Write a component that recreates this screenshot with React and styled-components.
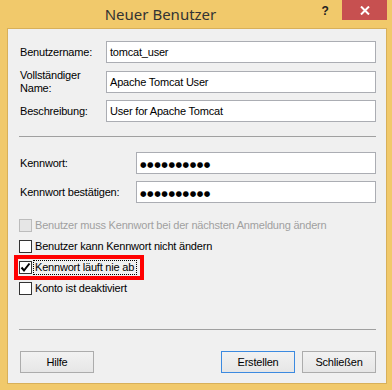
import React from "react";
import styled, { createGlobalStyle } from "styled-components";

const GlobalStyle = createGlobalStyle`
  html, body {
    margin: 0;
    padding: 0;
    background: #f1c96b;
  }
  * {
    box-sizing: border-box;
  }
`;

const Window = styled.div`
  width: 392px;
  height: 390px;
  display: flex;
  flex-direction: column;
  background: #f1c96b;
  font-family: "Liberation Sans", Arial, sans-serif;
  font-size: 11px;
  letter-spacing: -0.2px;
  color: #000;
  overflow: hidden;
`;

const TitleBar = styled.div`
  height: 29px;
  display: flex;
  align-items: flex-start;
`;

const Title = styled.div`
  flex: 1;
  text-align: center;
  font-family: "Noto Sans", "Open Sans", sans-serif;
  font-size: 15px;
  letter-spacing: 0;
  line-height: 29px;
  color: #333;
  padding-left: 4px;
`;

const HelpButton = styled.div`
  width: 16px;
  height: 20px;
  margin-right: 9px;
  font-weight: bold;
  font-size: 12px;
  line-height: 22px;
  color: #222;
  text-align: center;
`;

const CloseButton = styled.div`
  width: 45px;
  height: 20px;
  margin-right: 5px;
  background: #c75050;
  display: flex;
  align-items: center;
  justify-content: center;
`;

const Client = styled.div`
  height: 354px;
  margin: 0 6px 0 8px;
  background: #f0f0f0;
  box-shadow: 0 0 0 1px #d8b05a;
  padding: 12px 10px 10px 11px;
  display: flex;
  flex-direction: column;
`;

const FieldRow = styled.div`
  display: flex;
  align-items: center;
  height: 22px;
  margin-top: ${(p) => p.$mt || 0}px;
`;

const Label = styled.div`
  width: ${(p) => p.$w}px;
  flex-shrink: 0;
  padding-left: 1px;
  line-height: 13px;
`;

const TextBox = styled.div`
  flex: 1;
  height: 22px;
  background: #fff;
  border: 1px solid #abadb3;
  padding: 0 3px;
  line-height: 20px;
  white-space: nowrap;
  overflow: hidden;
`;

const Dots = styled.span`
  font-family: "DejaVu Sans", sans-serif;
  font-size: 7.5px;
  letter-spacing: 0.55px;
  line-height: 20px;
`;

const Separator = styled.div`
  height: 1px;
  background: #a0a0a0;
  margin-top: ${(p) => p.$mt}px;
`;

const CheckList = styled.div`
  display: flex;
  flex-direction: column;
  gap: 8px;
  margin-top: 16px;
`;

const CheckRow = styled.div`
  display: flex;
  align-items: center;
  height: 13px;
  color: ${(p) => (p.$disabled ? "#a0a0a0" : "#000")};
`;

const Highlight = styled.div`
  display: inline-flex;
  align-items: center;
  height: 15px;
  outline: 4px solid #ff0000;
  outline-offset: 1px;
  padding-right: 3px;
`;

const Box = styled.div`
  width: 13px;
  height: 13px;
  flex-shrink: 0;
  background: ${(p) => (p.$disabled ? "#e6e6e6" : "#fff")};
  border: 1px solid ${(p) => (p.$disabled ? "#bcbcbc" : "#333")};
  display: flex;
  align-items: center;
  justify-content: center;
`;

const CheckText = styled.span`
  line-height: 13px;
  white-space: nowrap;
  outline: ${(p) => (p.$focus ? "1px dotted #000" : "none")};
  padding: ${(p) => (p.$focus ? "0 2px 0 1px" : "0")};
  margin-left: ${(p) => (p.$focus ? "2px" : "3px")};
`;

const ButtonRow = styled.div`
  display: flex;
  gap: 7px;
  margin-top: 21px;
`;

const Button = styled.div`
  width: 74px;
  height: 22px;
  border: 1px solid ${(p) => (p.$default ? "#3c8ae0" : "#acacac")};
  background: linear-gradient(#f2f2f2, #e6e6e6);
  display: flex;
  align-items: center;
  justify-content: center;
  margin-right: ${(p) => (p.$push ? "auto" : "0")};
  margin-left: ${(p) => (p.$first ? "1px" : "0")};
`;

const CheckMark = () => (
  <svg width="11" height="11" viewBox="0 0 11 11">
    <path d="M1.5 5.5 L4 8.5 L9.5 1.5" fill="none" stroke="#000" strokeWidth="2" />
  </svg>
);

const CloseIcon = () => (
  <svg width="10" height="9" viewBox="0 0 10 9">
    <path d="M1 0.5 L9 8.5 M9 0.5 L1 8.5" stroke="#fff" strokeWidth="2" />
  </svg>
);

const checks = [
  { text: "Benutzer muss Kennwort bei der nächsten Anmeldung ändern", disabled: true },
  { text: "Benutzer kann Kennwort nicht ändern" },
  { text: "Kennwort läuft nie ab", checked: true, highlight: true },
  { text: "Konto ist deaktiviert" },
];

export default function App() {
  return (
    <>
      <GlobalStyle />
      <Window>
        <TitleBar>
          <Title>Neuer Benutzer</Title>
          <HelpButton>?</HelpButton>
          <CloseButton>
            <CloseIcon />
          </CloseButton>
        </TitleBar>
        <Client>
          <FieldRow>
            <Label $w={87}>Benutzername:</Label>
            <TextBox>tomcat_user</TextBox>
          </FieldRow>
          <FieldRow $mt={8}>
            <Label $w={87}>
              Vollständiger
              <br />
              Name:
            </Label>
            <TextBox>Apache Tomcat User</TextBox>
          </FieldRow>
          <FieldRow $mt={7}>
            <Label $w={87}>Beschreibung:</Label>
            <TextBox>User for Apache Tomcat</TextBox>
          </FieldRow>

          <Separator $mt={14} />

          <FieldRow $mt={15}>
            <Label $w={117}>Kennwort:</Label>
            <TextBox>
              <Dots>●●●●●●●●●●</Dots>
            </TextBox>
          </FieldRow>
          <FieldRow $mt={7}>
            <Label $w={117}>Kennwort bestätigen:</Label>
            <TextBox>
              <Dots>●●●●●●●●●●</Dots>
            </TextBox>
          </FieldRow>

          <CheckList>
            {checks.map((c) => {
              const inner = (
                <>
                  <Box $disabled={c.disabled}>{c.checked && <CheckMark />}</Box>
                  <CheckText $focus={c.highlight}>{c.text}</CheckText>
                </>
              );
              return (
                <CheckRow key={c.text} $disabled={c.disabled}>
                  {c.highlight ? <Highlight>{inner}</Highlight> : inner}
                </CheckRow>
              );
            })}
          </CheckList>

          <Separator $mt={34} />

          <ButtonRow>
            <Button $push $first>Hilfe</Button>
            <Button $default>Erstellen</Button>
            <Button>Schließen</Button>
          </ButtonRow>
        </Client>
      </Window>
    </>
  );
}
